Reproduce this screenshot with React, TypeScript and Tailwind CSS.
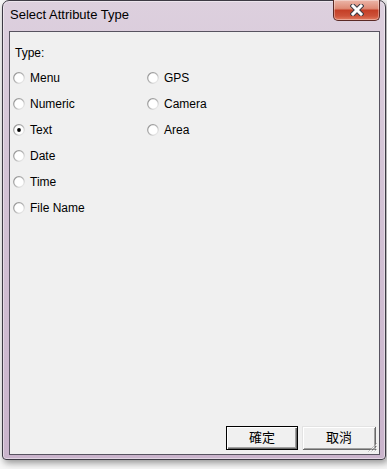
import React, { useState } from 'react';

const leftTypes = ['Menu', 'Numeric', 'Text', 'Date', 'Time', 'File Name'];
const rightTypes = ['GPS', 'Camera', 'Area'];

function Radio({ checked }: { checked: boolean }) {
  return (
    <svg width="12" height="12" viewBox="0 0 12 12" className="shrink-0">
      <defs>
        <linearGradient id="rb" x1="0" y1="0" x2="1" y2="1">
          <stop offset="0" stopColor="#8a8a8a" />
          <stop offset="0.5" stopColor="#b4b4b4" />
          <stop offset="1" stopColor="#fafafa" />
        </linearGradient>
      </defs>
      <circle cx="6" cy="6" r="5.3" fill="#ffffff" stroke="url(#rb)" strokeWidth="1.2" />
      {checked && <circle cx="6" cy="6" r="1.9" fill="#000000" />}
    </svg>
  );
}

function TypeOption({ label, value, onPick }: { label: string; value: string; onPick: (v: string) => void }) {
  return (
    <div className="h-[26px] flex items-center gap-[5px] cursor-default" onClick={() => onPick(label)}>
      <Radio checked={value === label} />
      <span className="text-[12px] leading-[14px] text-black">{label}</span>
    </div>
  );
}

export default function App() {
  const [type, setType] = useState('Text');

  return (
    <div className="w-[387px] h-[469px] bg-[#f7f7f7] pl-[2px] overflow-hidden font-['Liberation_Sans','Noto_Sans_CJK_TC',sans-serif]">
      {/* window frame */}
      <div className="w-[384px] h-[460px] flex flex-col rounded-t-[7px] rounded-b-[4px] border border-[#3d3a44] bg-[linear-gradient(to_bottom,#ddd0de,#d4c4d6_35%,#cab4cc)] shadow-[inset_0_0_0_1px_rgba(255,255,255,0.45),2px_3px_7px_rgba(0,0,0,0.4)]">
        {/* title bar */}
        <div className="h-[30px] flex items-start justify-between">
          <span className="pl-[7px] pt-[6px] text-[13px] leading-[16px] text-black">Select Attribute Type</span>
          <button className="-mt-[1px] mr-[5px] w-[47px] h-[21px] flex items-center justify-center rounded-b-[5px] border border-t-0 border-[#5b2a26] bg-[linear-gradient(to_bottom,#ebb6a9_0%,#df8b76_42%,#c43f27_52%,#cd5239_80%,#e27c62_100%)] shadow-[inset_0_0_0_1px_rgba(255,255,255,0.35)]">
            <svg width="14" height="12" viewBox="0 0 14 12">
              <path d="M3 2 L11 10 M11 2 L3 10" stroke="#3c3c44" strokeWidth="5" strokeLinecap="square" />
              <path d="M3 2 L11 10 M11 2 L3 10" stroke="#ffffff" strokeWidth="3" strokeLinecap="square" />
            </svg>
          </button>
        </div>

        {/* client area */}
        <div className="relative flex-1 ml-[6px] mr-[5px] mb-[4px] flex flex-col border border-[#575360] bg-[#f0f0f0]">
          <div className="pl-[5px] pt-[14px] text-[12px] leading-[14px] text-black">Type:</div>

          <div className="flex pl-[3px] pt-[5px]">
            <div className="w-[134px] flex flex-col">
              {leftTypes.map((t) => (
                <TypeOption key={t} label={t} value={type} onPick={setType} />
              ))}
            </div>
            <div className="flex flex-col">
              {rightTypes.map((t) => (
                <TypeOption key={t} label={t} value={type} onPick={setType} />
              ))}
            </div>
          </div>

          <div className="flex-1" />

          {/* buttons */}
          <div className="flex justify-end gap-[4px] pr-[3px] pb-[4px]">
            <button className="w-[72px] h-[24px] flex items-center justify-center border border-black bg-[#f0f0f0] text-[13px] text-black shadow-[inset_1px_1px_0_#ffffff,inset_-1px_-1px_0_#696969,inset_-2px_-2px_0_#a0a0a0]">
              確定
            </button>
            <button className="w-[74px] h-[24px] flex items-center justify-center bg-[#f0f0f0] text-[13px] text-black shadow-[inset_1px_1px_0_#e3e3e3,inset_-1px_-1px_0_#696969,inset_2px_2px_0_#ffffff,inset_-2px_-2px_0_#a0a0a0]">
              取消
            </button>
          </div>

          {/* size grip */}
          <svg width="11" height="11" viewBox="0 0 11 11" className="absolute right-[1px] bottom-[1px]">
            <path d="M10 1 L1 10 M10 4 L4 10 M10 7 L7 10" stroke="#a0a0a0" strokeWidth="1" strokeDasharray="1 1" />
            <path d="M10 2 L2 10 M10 5 L5 10 M10 8 L8 10" stroke="#ffffff" strokeWidth="1" strokeDasharray="1 1" />
          </svg>
        </div>
      </div>
    </div>
  );
}
